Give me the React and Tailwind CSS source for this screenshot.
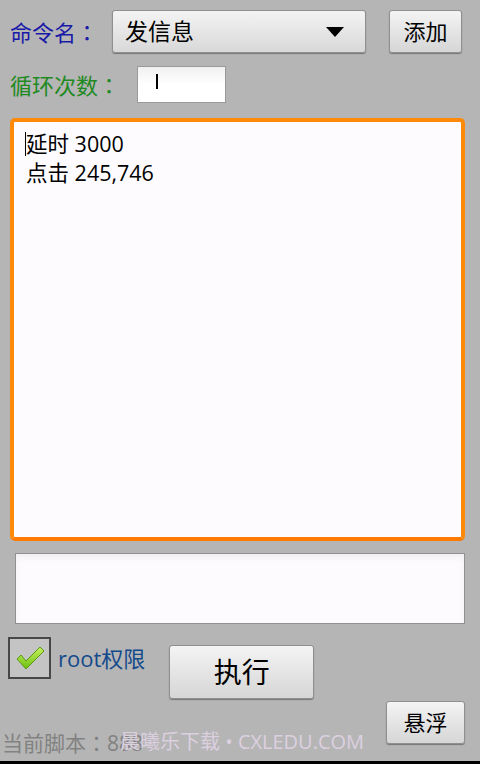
import { useState } from 'react'

const font = { fontFamily: '"Open Sans", "Noto Sans CJK SC", sans-serif' }

// full-width colon, centered in its cell as on the device
function Colon() {
  return <span style={{ fontFamily: '"Noto Sans CJK JP", sans-serif' }}>：</span>
}

function Btn({ className = '', children }) {
  return (
    <button
      className={`flex items-center justify-center rounded-[3px] border border-[#8f8f8f] bg-gradient-to-b from-[#f4f4f4] to-[#d6d6d6] text-black shadow-[0_1px_1px_rgba(0,0,0,0.35)] ${className}`}
    >
      {children}
    </button>
  )
}

export default function App() {
  const [checked] = useState(true)
  return (
    <div className="relative w-[480px] h-[764px] overflow-hidden bg-[#b5b5b5]" style={font}>
      {/* 命令名 row */}
      <div className="flex items-center pt-[10px] pl-[10px] h-[53px]">
        <span className="w-[102px] text-[22px] text-[#1a1aa8] leading-none">命令名<Colon /></span>
        <div className="flex items-center justify-between w-[254px] h-[43px] rounded-[3px] border border-[#8f8f8f] bg-gradient-to-b from-[#f4f4f4] to-[#d8d8d8] shadow-[0_1px_1px_rgba(0,0,0,0.35)] pl-[12px] pr-[21px]">
          <span className="text-[23px] text-black leading-none">发信息</span>
          <svg width="18" height="10" viewBox="0 0 18 10"><path d="M0 0h18L9 10z" fill="#000" /></svg>
        </div>
        <Btn className="ml-[23px] w-[73px] h-[43px] text-[22px]">添加</Btn>
      </div>

      {/* 循环次数 row */}
      <div className="flex items-center mt-[13px] pl-[10px] h-[37px]">
        <span className="w-[127px] text-[22px] text-[#1f8a1f] leading-none">循环次数<Colon /></span>
        <div className="w-[89px] h-[37px] border border-[#9a9a9a] bg-gradient-to-b from-[#f0f0f0] via-white to-white flex items-start pt-[7px] pl-[18px]">
          <span className="block w-[2px] h-[15px] bg-black"></span>
        </div>
      </div>

      {/* script textarea */}
      <div className="ml-[10px] mt-[15px] w-[455px] h-[423px] rounded-[5px] border-[4px] border-[#ff8a0a] border-b-[#ff7a00] bg-[#fdfbfd] px-[12px] pt-[7px]">
        <div className="text-[21.5px] leading-[29px] text-black">
          <div className="relative">
            <span className="absolute left-[-1px] top-[3px] w-[1px] h-[24px] bg-black"></span>
            延时 3000
          </div>
          <div>点击 245,746</div>
        </div>
      </div>

      {/* second box */}
      <div className="ml-[15px] mt-[12px] w-[450px] h-[71px] border border-[#919191] bg-[#fdfbfd] p-[4px] shadow-[inset_0_4px_6px_rgba(0,0,0,0.05)]"></div>

      {/* checkbox + 执行 */}
      <div className="flex items-start mt-[13px] pl-[8px]">
        <div className="flex items-center">
          <div className="w-[43px] h-[42px] border-[2px] border-[#474747] bg-[#c4c4c4] flex items-center justify-center">
            {checked && (
              <svg width="30" height="26" viewBox="0 0 30 26">
                <defs>
                  <linearGradient id="ck" x1="0" y1="0" x2="0" y2="1">
                    <stop offset="0" stopColor="#c8f060" />
                    <stop offset="1" stopColor="#6cc010" />
                  </linearGradient>
                </defs>
                <path d="M2 14 L6 10 L11 16 L25 2 L29 6 L11 24 Z" fill="url(#ck)" stroke="#5a9a10" strokeWidth="1" />
              </svg>
            )}
          </div>
          <span className="ml-[7px] text-[22px] text-[#134a8c] leading-none">root权限</span>
        </div>
        <Btn className="ml-[24px] mt-[8px] w-[145px] h-[54px] text-[28px]">执行</Btn>
      </div>

      {/* 悬浮 */}
      <div className="flex justify-end pr-[15px] mt-[2px]">
        <Btn className="w-[79px] h-[43px] text-[22px]">悬浮</Btn>
      </div>

      {/* current script, with the site watermark laid over it */}
      <div className="absolute left-[2px] top-[728px] text-[21px] leading-[28px] text-[#828282]">当前脚本<Colon />888</div>
      <div className="absolute left-[120px] top-[729px] text-[20px] leading-[26px] text-[#dcd0e0]">晨曦乐下载 • CXLEDU.COM</div>

      <div className="absolute left-0 bottom-0 w-full h-[3px] bg-black"></div>
    </div>
  )
}
